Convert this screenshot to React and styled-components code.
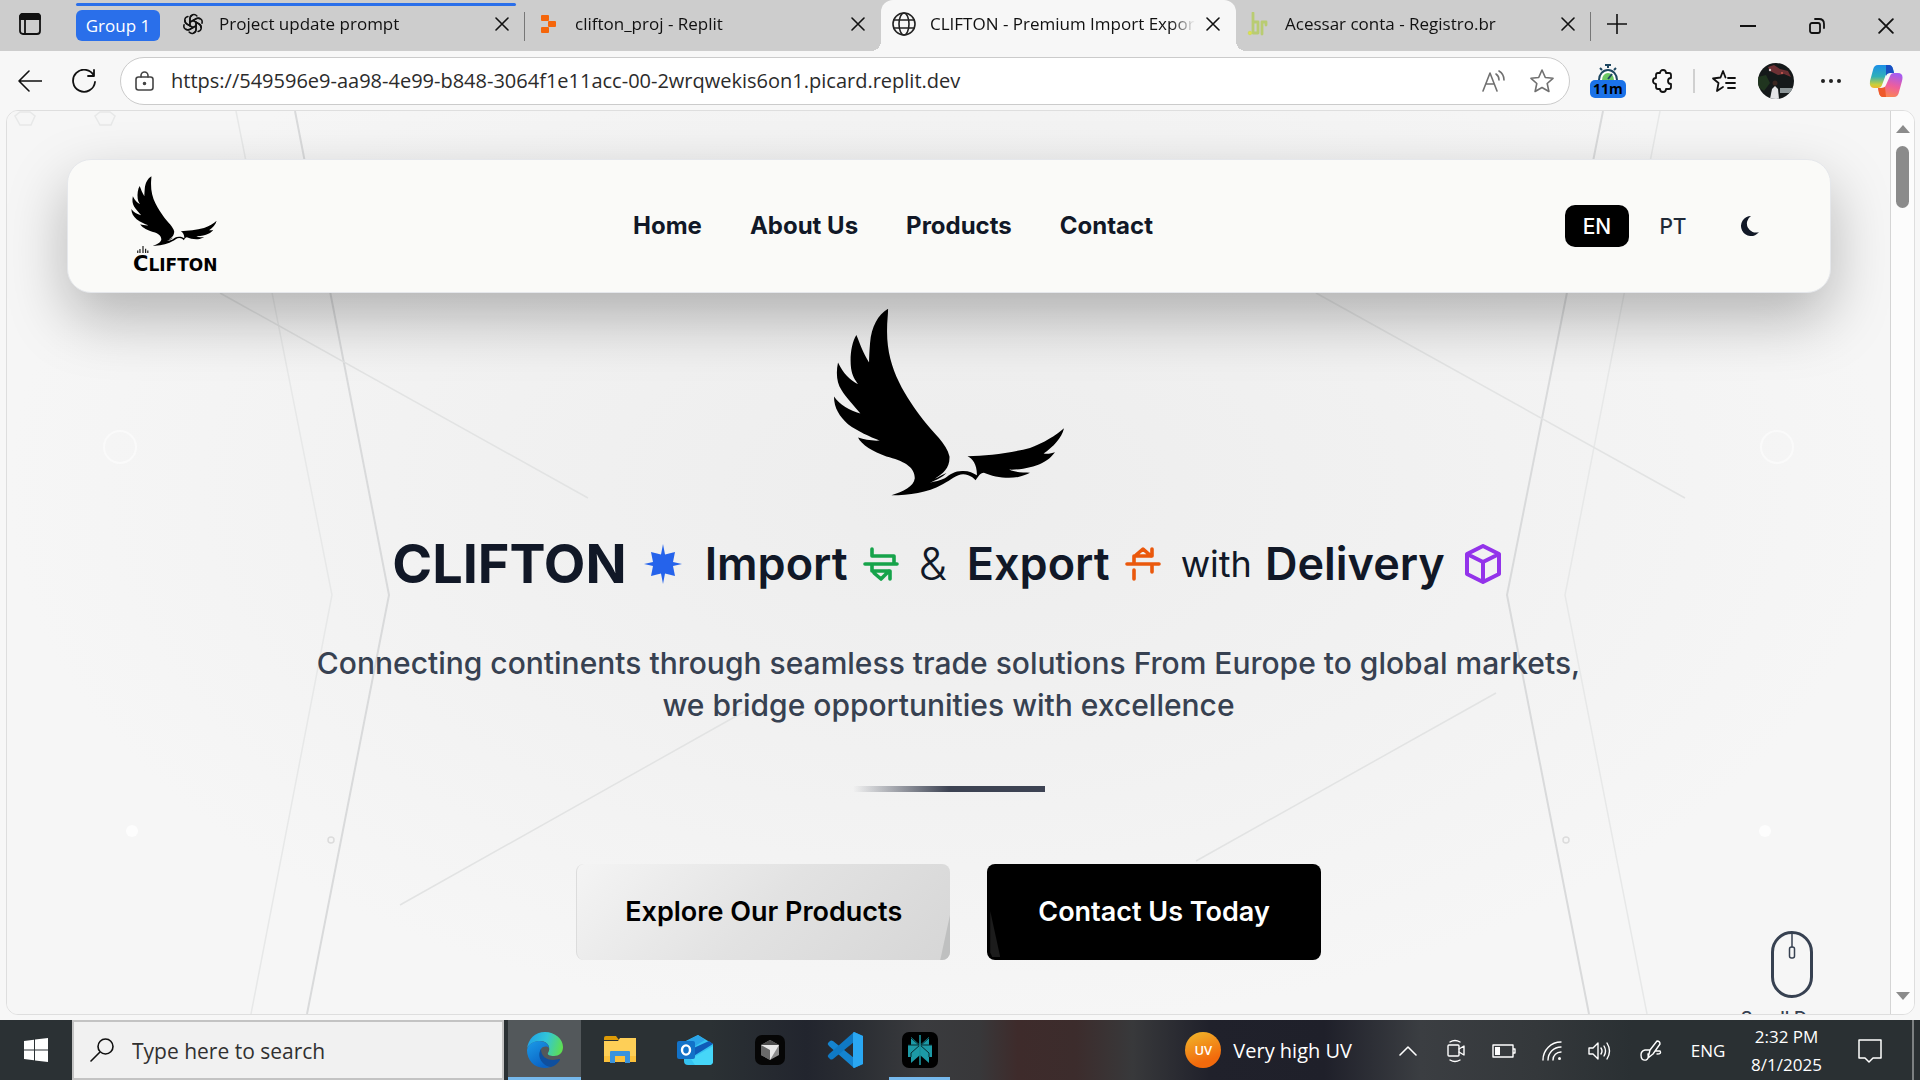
import React from 'react';
import styled, { createGlobalStyle, css } from 'styled-components';

const ui = '"Open Sans", "Noto Sans", sans-serif';
const site = 'Inter, "Liberation Sans", sans-serif';

const GlobalStyle = createGlobalStyle`
  *, *::before, *::after { box-sizing: border-box; }
  body { margin: 0; background: #f7f7f7; font-family: ${ui}; color: #111; }
  button, input { font: inherit; color: inherit; }
  button { background: none; border: 0; padding: 0; cursor: pointer; }
  svg { display: block; flex: none; }
  h1, p { margin: 0; }
`;

const Screen = styled.div`
  height: 100vh;
  display: flex;
  flex-direction: column;
  overflow: hidden;
`;

/* ---------- tab strip ---------- */

const TabStrip = styled.header`
  flex: none;
  height: 51px;
  display: flex;
  background: #cdcdcd;
  font-size: 17px;
`;

const WorkspaceButton = styled.button`
  width: 76px;
  padding-left: 19px;
  padding-bottom: 4px;
`;

const TabGroup = styled.div`
  display: flex;
  flex: 0 1 450px;
  min-width: 0;
  position: relative;

  &::before {
    content: '';
    position: absolute;
    left: 0;
    right: 10px;
    top: 3px;
    height: 3px;
    border-radius: 2px;
    background: #2a6fea;
  }
`;

const GroupPill = styled.button`
  width: 84px;
  height: 31px;
  margin: 10px 10px 0 0;
  border-radius: 6px;
  background: #2a6fea;
  color: #fff;
  flex: none;
`;

const Tab = styled.div`
  flex: 0 1 355px;
  min-width: 0;
  display: flex;
  align-items: center;
  gap: 14px;
  padding: 0 11px 4px;
  position: relative;

  ${(p) => p.$divided && css`
    &::after {
      content: '';
      position: absolute;
      right: 0;
      top: 12px;
      height: 29px;
      width: 1px;
      background: #777;
    }
  `}

  ${(p) => p.$active && css`
    background: #f7f7f7;
    border-radius: 12px 12px 0 0;
    &::before, &::after {
      content: '';
      position: absolute;
      bottom: 0;
      width: 10px;
      height: 10px;
    }
    &::before { left: -10px; background: radial-gradient(circle at 0 0, transparent 10px, #f7f7f7 10px); }
    &::after { right: -10px; background: radial-gradient(circle at 100% 0, transparent 10px, #f7f7f7 10px); }
  `}
`;

const TabTitle = styled.span`
  flex: 1;
  min-width: 0;
  margin-right: -8px;
  overflow: hidden;
  white-space: nowrap;
  color: #111;
  mask-image: linear-gradient(90deg, #000 calc(100% - 24px), transparent);
`;

const TabClose = styled.button`
  width: 24px;
  height: 24px;
  display: grid;
  place-items: center;
  flex: none;
`;

const NewTab = styled.button`
  width: 52px;
  padding-bottom: 4px;
  display: grid;
  place-items: center;
`;

const WindowControls = styled.div`
  margin-left: auto;
  display: flex;
`;

const WindowButton = styled.button`
  width: 69px;
  display: grid;
  place-items: center;
`;

/* ---------- toolbar ---------- */

const Toolbar = styled.div`
  flex: none;
  height: 59px;
  display: flex;
  align-items: center;
  padding: 0 6px;
  background: #f7f7f7;
`;

const ToolButton = styled.button`
  width: ${(p) => p.$w || 54}px;
  height: 48px;
  display: grid;
  place-items: center;
  flex: none;
`;

const AddressBar = styled.form`
  flex: 1;
  min-width: 0;
  height: 48px;
  margin-left: 6px;
  display: flex;
  align-items: center;
  gap: 16px;
  padding: 0 3px 0 14px;
  border: 1px solid #cbcbcb;
  border-radius: 24px;
  background: #fff;
`;

const AddressInput = styled.input`
  flex: 1;
  min-width: 0;
  border: 0;
  outline: 0;
  padding: 0;
  background: none;
  font-size: 20px;
  color: #2b2b2b;
`;

const AddressActions = styled.div`
  display: flex;
`;

const TimerButton = styled.button`
  width: 36px;
  margin: 0 10px 0 20px;
  display: flex;
  flex-direction: column;
  align-items: center;
`;

const TimerBadge = styled.span`
  width: 36px;
  height: 18px;
  border-radius: 5px;
  background: #1b72e8;
  color: #000;
  font-size: 14px;
  line-height: 18px;
  font-weight: 700;
`;

const ToolDivider = styled.span`
  width: 2px;
  height: 24px;
  margin: 0 5px 0 3px;
  background: #d0d0d0;
`;

/* ---------- web page ---------- */

const PageFrame = styled.div`
  flex: 1;
  min-height: 0;
  display: flex;
  margin: 0 5px 5px 6px;
  border: 1px solid #dedede;
  border-radius: 12px;
  overflow: hidden;
`;

const Page = styled.main`
  flex: 1;
  min-width: 0;
  overflow: hidden;
  position: relative;
  display: flex;
  flex-direction: column;
  align-items: center;
  font-family: ${site};
  color: #111827;
  background:
    radial-gradient(ellipse 50% 60% at 50% 42%, #ededed 0%, rgba(239, 239, 239, 0.7) 50%, rgba(244, 244, 244, 0) 100%),
    #f6f6f6;
`;

const Backdrop = styled.svg`
  position: absolute;
  inset: 0;
  width: 100%;
  height: 100%;
`;

const NavBar = styled.nav`
  position: relative;
  align-self: stretch;
  height: 134px;
  flex: none;
  margin: 48px 59px 0 60px;
  padding: 0 47px 0 63px;
  display: flex;
  align-items: center;
  justify-content: space-between;
  border: 1px solid #e5e7eb;
  border-radius: 24px;
  background: #fafaf8;
  box-shadow: 0 25px 60px rgba(0, 0, 0, 0.27);
`;

const Brand = styled.a`
  width: 90px;
  display: flex;
  flex-direction: column;
  align-items: flex-start;
  color: #000;
  text-decoration: none;
`;

const Columns = styled.svg`
  margin-left: 5px;
`;

const Wordmark = styled.span`
  margin-left: 2px;
  font-family: "DejaVu Sans", sans-serif;
  font-weight: 700;
  font-size: 17px;
  line-height: 22px;
`;

const WordmarkCap = styled.span`
  font-size: 21px;
`;

const NavLinks = styled.div`
  display: flex;
  gap: 48px;
`;

const NavLink = styled.a`
  font-size: 24px;
  line-height: 36px;
  font-weight: 700;
  color: #111827;
  text-decoration: none;
`;

const NavTools = styled.div`
  display: flex;
  align-items: center;
  gap: 12px;
`;

const LangButton = styled.button`
  width: 64px;
  height: 42px;
  border-radius: 10px;
  font-size: 21px;
  font-weight: 500;
  background: ${(p) => (p.$on ? '#000' : 'transparent')};
  color: ${(p) => (p.$on ? '#fff' : '#1f2937')};
`;

const ThemeButton = styled.button`
  width: 66px;
  height: 42px;
  display: grid;
  place-items: center;
`;

const HeroMark = styled.div`
  position: relative;
  margin-top: 15px;
`;

const Headline = styled.h1`
  position: relative;
  display: flex;
  align-items: center;
  gap: 20px;
  margin-top: 34px;
  padding-right: 4px;
  height: 68px;
  font-weight: 400;
  white-space: nowrap;
`;

const HeadPart = styled.span`
  display: flex;
  align-items: center;
  gap: ${(p) => p.$gap || 15}px;
`;

const Word = styled.span`
  font-size: ${(p) => p.$size}px;
  line-height: 68px;
  font-weight: ${(p) => p.$weight};
`;

const Lead = styled.p`
  position: relative;
  max-width: 1300px;
  margin-top: 44px;
  font-size: 30px;
  line-height: 42px;
  font-weight: 500;
  text-align: center;
  color: #374151;
`;

const Rule = styled.div`
  position: relative;
  width: 192px;
  height: 6px;
  margin-top: 60px;
  background: linear-gradient(90deg, transparent, #3d4353 50%, #3d4353);
`;

const Actions = styled.div`
  position: relative;
  display: flex;
  gap: 37px;
  margin-top: 72px;
`;

const Action = styled.button`
  position: relative;
  height: 96px;
  padding: 0 ${(p) => (p.$dark ? 51 : 48)}px 2px;
  border-radius: 8px;
  overflow: hidden;
  font-size: 27px;
  font-weight: 600;
  white-space: nowrap;
  color: ${(p) => (p.$dark ? '#fff' : '#000')};
  background: ${(p) => (p.$dark ? '#000' : 'linear-gradient(135deg, #f4f4f4, #e2e2e2 50%, #d6d6d6)')};
  border-left: ${(p) => (p.$dark ? '0' : '1px solid #dcdcdc')};

  &::after {
    content: '';
    position: absolute;
    width: 10px;
    height: 46px;
    ${(p) => (p.$dark
      ? 'left: 3px; bottom: 3px; background: #1c1c1c; clip-path: polygon(0 0, 100% 100%, 20% 100%, 0 90%);'
      : 'right: 0; bottom: 0; background: #bfc0c0; clip-path: polygon(100% 0, 100% 100%, 0 100%);')}
  }
`;

const ScrollHint = styled.div`
  position: absolute;
  right: 46px;
  top: 820px;
  display: flex;
  flex-direction: column;
  align-items: center;
  gap: 7px;
  font-size: 18px;
  line-height: 27px;
  font-weight: 500;
  width: 104px;
  white-space: nowrap;
  color: #374151;
`;

const ScrollTrack = styled.div`
  width: 24px;
  flex: none;
  display: flex;
  flex-direction: column;
  align-items: center;
  padding: 13px 0;
  background: #fcfcfc;
  border-left: 1px solid #d5d5d5;
`;

const ScrollThumb = styled.div`
  width: 13px;
  height: 62px;
  margin: 12px 0 auto;
  border-radius: 7px;
  background: #8b8b8b;
`;

/* ---------- taskbar ---------- */

const Taskbar = styled.footer`
  flex: none;
  height: 60px;
  display: flex;
  color: #fff;
  background: linear-gradient(90deg, #2b3134 0, #2b3134 37%, #22252e 42%, #2c2f34 45%, #3a3b3e 48%, #38383a 51%, #3e2b2b 53%, #3c2c2c 56%, #38393b 59%, #20212b 63%, #1f202a 69%, #3b3e42 74%, #34383b 80%, #2a3033 85%, #2a3033 100%);
`;

const StartButton = styled.button`
  width: 72px;
  display: grid;
  place-items: center;
`;

const SearchBox = styled.label`
  width: 432px;
  display: flex;
  align-items: center;
  gap: 18px;
  padding-left: 16px;
  margin-right: 4px;
  background: #f1f1f1;
  border: 2px solid #c3c3c3;
`;

const SearchInput = styled.input`
  flex: 1;
  min-width: 0;
  padding: 2px 0 0;
  border: 0;
  outline: 0;
  background: none;
  font-size: 21px;
  &::placeholder { color: #303030; opacity: 1; }
`;

const Apps = styled.div`
  display: flex;
  gap: 2px;
`;

const AppButton = styled.button`
  width: 73px;
  display: grid;
  place-items: center;
  position: relative;
  background: ${(p) => (p.$focused ? '#53585b' : 'none')};

  ${(p) => p.$open && css`
    &::after {
      content: '';
      position: absolute;
      left: ${p.$focused ? 0 : 6}px;
      right: ${p.$focused ? 0 : 6}px;
      bottom: 0;
      height: 3px;
      background: #76b9ed;
    }
  `}
`;

const Tray = styled.div`
  margin-left: auto;
  display: flex;
`;

const Weather = styled.button`
  display: flex;
  align-items: center;
  gap: 12px;
  margin-right: 32px;
  font-size: 20px;
  white-space: nowrap;
`;

const UvDot = styled.span`
  width: 36px;
  height: 36px;
  border-radius: 50%;
  background: linear-gradient(160deg, #f0b92c, #f26a0c 75%);
  font-size: 13px;
  line-height: 36px;
  font-weight: 600;
`;

const TrayButton = styled.button`
  width: ${(p) => p.$w || 48}px;
  padding-top: 1px;
  display: grid;
  place-items: center;
  align-content: center;
  font-size: 17px;
  line-height: 28px;
  white-space: nowrap;
`;

const ShowDesktop = styled.button`
  width: 8px;
  margin-left: 7px;
  border-left: 2px solid #7c8082;
`;

/* ---------- drawings ---------- */

const Line = ({ w = 24, h, vb, d, stroke = 'currentColor', sw = 1.6, fill = 'none', children }) => (
  <svg width={w} height={h || w} viewBox={vb || `0 0 ${w} ${h || w}`} fill={fill} stroke={stroke} strokeWidth={sw} strokeLinecap="round" strokeLinejoin="round" aria-hidden="true">
    {d && <path d={d} />}
    {children}
  </svg>
);

const Cross = ({ size = 14 }) => <Line w={size} vb="0 0 14 14" sw={1.6} d="M1 1L13 13M13 1L1 13" />;

const Eagle = ({ width, height }) => (
  <svg width={width} height={height} viewBox="100 55 695 563" preserveAspectRatio="none" role="img" aria-label="Clifton eagle">
    <path fill="#000" d="M265 57C235 75 215 110 211 160C209 185 208 205 208 218C190 190 180 160 170 136C155 160 150 200 154 235C158 260 165 270 175 283C150 270 130 250 115 218C108 250 112 280 125 300C140 325 165 350 182 371C150 362 120 345 103 320C103 355 120 380 145 403C175 425 210 440 240 452C215 453 195 450 175 443C185 465 220 485 260 500C310 513 345 530 345 565C342 590 310 605 275 616C330 615 380 610 430 582C455 570 470 553 490 553C510 555 520 562 527 571C535 560 540 548 552 548C580 560 620 568 655 561C670 557 680 553 690 548C670 548 645 548 628 539C665 540 700 532 725 520C745 510 755 500 765 487C755 490 745 493 731 491C760 470 785 445 792 415C770 435 730 460 690 474C630 490 560 498 503 499C518 505 532 525 531 556C520 548 505 542 487 543C465 543 450 553 435 565C420 572 405 575 390 578C410 570 430 560 440 549C430 552 415 563 405 566C430 550 450 535 449 500C440 460 400 430 370 390C320 320 260 240 262 120C262 95 265 75 265 57Z" />
  </svg>
);

const OpenAiIcon = () => (
  <Line w={24} stroke="#111" sw={1.5}>
    {[0, 60, 120, 180, 240, 300].map((a) => (
      <path key={a} transform={`rotate(${a} 12 12)`} d="M8.9 13.8V6.3a4 4 0 0 1 7-2.4M8.9 10.3L15 6.8a4 4 0 0 1 4 .1" />
    ))}
  </Line>
);

const ReplitIcon = () => (
  <svg width="24" height="24" viewBox="0 0 24 24" aria-hidden="true">
    <g fill="#f5660b">
      <rect x="4" y="3" width="8" height="6" rx="1" />
      <rect x="11" y="9" width="8" height="6" rx="1" />
      <rect x="4" y="15" width="8" height="6" rx="1" />
    </g>
  </svg>
);

const GlobeIcon = () => (
  <Line w={24} stroke="#222" sw={1.6}>
    <circle cx="12" cy="12" r="11" />
    <ellipse cx="12" cy="12" rx="5" ry="11" />
    <path d="M2 8H22M2 16H22" />
  </Line>
);

const BrIcon = () => (
  <Line w={24} sw={2.8} stroke="#b9cc72">
    <path d="M6 1V21H11V10H6M15 22V10H19V13" />
    <circle cx="3" cy="21" r="1.8" fill="#e2e04a" stroke="#cddb60" strokeWidth="1" />
  </Line>
);

const TimerIcon = () => (
  <svg width="24" height="16" viewBox="0 0 24 16" aria-hidden="true">
    <path d="M9 1H15M12 1V4M4 4L6 6M20 4L18 6" stroke="#1d4660" strokeWidth="2" />
    <path d="M3 16A9 10 0 0 1 21 16" fill="#fff" stroke="#1d4660" strokeWidth="2" />
    <path d="M6 16A6 7 0 0 1 18 16" fill="#6cc864" />
    <path d="M12 15L16 10" stroke="#1d4660" strokeWidth="2" />
  </svg>
);

const Avatar = () => (
  <svg width="36" height="36" viewBox="0 0 36 36" aria-hidden="true">
    <clipPath id="avatarClip"><circle cx="18" cy="18" r="18" /></clipPath>
    <g clipPath="url(#avatarClip)">
      <rect width="36" height="36" fill="#15191a" />
      <path d="M10 4L16 2L22 6L30 8L33 14L26 11L20 12L12 8Z" fill="#6d3034" />
      <path d="M0 14L8 12L12 20L6 28L0 24Z" fill="#20351f" />
      <path d="M22 25H36V30H22Z" fill="#8d9698" />
      <path d="M14 26L17 23L20 26L21 36H12Z" fill="#e4e4e6" />
      <circle cx="17" cy="20" r="2.5" fill="#3a2620" />
      <circle cx="12" cy="7" r="1.2" fill="#d8c9ca" />
      <circle cx="24" cy="10" r="1" fill="#d25b52" />
    </g>
  </svg>
);

const CopilotIcon = () => (
  <svg width="34" height="32" viewBox="0 0 34 32" aria-hidden="true">
    <defs>
      <linearGradient id="coA" x1="0" y1="0" x2="0" y2="1">
        <stop offset="0" stopColor="#1b8fe8" /><stop offset=".5" stopColor="#2fb0b8" /><stop offset=".85" stopColor="#c9cf3a" /><stop offset="1" stopColor="#f3b52c" />
      </linearGradient>
      <linearGradient id="coB" x1="0.6" y1="0" x2="0.3" y2="1">
        <stop offset="0" stopColor="#a65cf0" /><stop offset=".5" stopColor="#ee5e9c" /><stop offset="1" stopColor="#fb8a4c" />
      </linearGradient>
    </defs>
    <path d="M9 0H20Q23 0 24 4L25 8H21Q17 8 16 12L13 20Q12 23 9 23H5Q0 23 1 16L4 5Q5 0 9 0Z" fill="url(#coA)" />
    <path d="M17 0H20Q23 0 24 4L25 8H21Q18 8 17 11Z" fill="#1a4fc2" />
    <path d="M25 32H14Q11 32 10 28L9 23H12Q16 23 17 20L21 11Q22 8 25 8H29Q35 8 33 16L30 27Q29 32 25 32Z" fill="url(#coB)" />
    <path d="M17 32H14Q11 32 10 28L9 23H12Q15 23 16 22Z" fill="#ee5a2c" />
  </svg>
);

const EdgeIcon = () => (
  <svg width="36" height="36" viewBox="0 0 36 36" aria-hidden="true">
    <defs>
      <linearGradient id="edA" x1="0" y1="0.4" x2="1" y2="0.6">
        <stop offset="0" stopColor="#1fa3e6" /><stop offset=".5" stopColor="#32c6d8" /><stop offset="1" stopColor="#5fe04e" />
      </linearGradient>
      <linearGradient id="edB" x1="0" y1="0" x2="0.6" y2="1">
        <stop offset="0" stopColor="#1b9be8" /><stop offset="1" stopColor="#0a62c4" />
      </linearGradient>
    </defs>
    <path d="M0 17C1 7 8 0 18 0C28 0 36 7 36 15C36 21 32 24 27 24C23 24 20 23 21 21C24 17 22 9 13 9C6 9 1 13 0 17Z" fill="url(#edA)" />
    <path d="M0 18C1 12 7 9 12 9C18 9 22 12 22 16C20 14 16 14 14 17C11 22 14 33 24 35C10 39 0 30 0 18Z" fill="url(#edB)" />
    <path d="M14 17C9 25 16 34 24 35C28 34 31 31 33 28C33 26 30 28 26 28C19 28 14 24 14 17Z" fill="#0f4f9e" />
  </svg>
);

const FolderIcon = () => (
  <svg width="34" height="28" viewBox="0 0 34 28" aria-hidden="true">
    <path d="M1 2Q1 0 3 0H13L16 4H1Z" fill="#dd9a06" />
    <path d="M1 5H15L17 2H33V26H1Z" fill="#fecf57" />
    <path d="M1 20H33V26H1Z" fill="#fcc13b" />
    <path d="M7 27V16Q7 15 8 15H26Q27 15 27 16V27H22V20H12V27Z" fill="#3a93dd" />
  </svg>
);

const OutlookIcon = () => (
  <svg width="36" height="30" viewBox="0 0 36 30" aria-hidden="true">
    <path d="M7 7L21 0L36 9V26Q36 30 32 30H11Q7 30 7 26Z" fill="#35c3f1" />
    <path d="M7 7L21 0L28 5L10 16Z" fill="#2ba4e8" />
    <path d="M10 16L32 6L36 9L15 22Z" fill="#0f5bb8" />
    <path d="M36 11L14 24L18 30H32Q36 30 36 26Z" fill="#46d6f8" />
    <rect x="0" y="6" width="18" height="18" rx="2" fill="#1272c8" />
    <ellipse cx="9" cy="15" rx="4" ry="4.6" fill="none" stroke="#fff" strokeWidth="2.4" />
  </svg>
);

const CubeAppIcon = () => (
  <svg width="30" height="30" viewBox="0 0 30 30" aria-hidden="true">
    <rect width="30" height="30" rx="7" fill="#060606" />
    <path d="M15 5L24 10V20L15 25L6 20V10Z" fill="#8d8d8d" />
    <path d="M6 10L15 14V25L6 20Z" fill="#6a6a6a" />
    <path d="M6 10L15 5L24 10L15 13Z" fill="#4d4d4d" />
    <path d="M6 10H24L15 25V15Z" fill="#e8e8e8" />
  </svg>
);

const VsCodeIcon = () => (
  <svg width="36" height="36" viewBox="0 0 36 36" aria-hidden="true">
    <path d="M27 0L36 4V32L27 36L2 14Q0 12 1 11L3 9Q4 8 6 9L27 26Z" fill="#1484d0" />
    <path d="M27 0L2 22Q0 24 1 25L3 27Q4 28 6 27L27 10Z" fill="#0f79c4" />
    <path d="M27 0L36 4V32L27 36Q26 36 26 34V2Q26 0 27 0Z" fill="#2aa7f2" />
  </svg>
);

const PerplexityIcon = () => (
  <svg width="36" height="36" viewBox="0 0 36 36" aria-hidden="true">
    <rect width="36" height="36" rx="7" fill="#000" />
    <path d="M9 5L18 13L27 5V13H30V25H27V31L18 23L9 31V25H6V13H9Z" fill="#1c9aa6" />
    <path d="M18 3V33M9 6L18 14L27 6M6 13H30M9 25V21L18 13L27 21V25" fill="none" stroke="#062c31" strokeWidth="1" />
    <path d="M18 3V33" stroke="#21b5c2" strokeWidth="1.2" />
  </svg>
);

const NavColumns = () => (
  <Columns width="14" height="7" viewBox="0 0 14 8" aria-hidden="true">
    <path d="M1 8V5M3.500 8V3.500M7 8V0M10 8V3M12.500 8V5" stroke="#222" strokeWidth="1.400" />
  </Columns>
);

const Scenery = () => (
  <Backdrop viewBox="7 111 1883 903" preserveAspectRatio="xMidYMin slice" fill="none" aria-hidden="true">
    <g stroke="#d9dadb" strokeWidth="2">
      <path d="M295 111L389 595L307 1014" />
      <path d="M1603 111L1507 595L1589 1014" />
    </g>
    <g stroke="#e7e8e8" strokeWidth="1.500">
      <path d="M236 111L332 595L251 1014M1660 111L1565 595L1647 1014" />
      <path d="M220 293L588 498M1316 293L1685 498M400 905L747 710M1196 861L1496 693" stroke="#e2e3e3" />
      <path d="M20 112H30L35 116L31 125H20L15 116ZM100 112H110L115 116L111 125H100L95 116Z" />
      <circle cx="331" cy="840" r="3" stroke="#dcdcdc" /><circle cx="1566" cy="840" r="3" stroke="#dcdcdc" />
    </g>
    <g stroke="#fafafa" strokeWidth="2">
      <circle cx="120" cy="447" r="16" /><circle cx="1777" cy="447" r="16" />
    </g>
    <g fill="#fdfdfd">
      <circle cx="132" cy="831" r="6" /><circle cx="1765" cy="831" r="6" />
    </g>
  </Backdrop>
);

/* ---------- composition ---------- */

const BrowserTab = ({ icon, title, active, divided }) => (
  <Tab $active={active} $divided={divided}>
    {icon}
    <TabTitle>{title}</TabTitle>
    <TabClose aria-label={`Close ${title}`}><Cross /></TabClose>
  </Tab>
);

const BrowserTabs = () => (
  <TabStrip>
    <WorkspaceButton aria-label="Tab actions">
      <Line w={22} stroke="#111" sw={1.8}>
        <rect x="1" y="1" width="20" height="20" rx="3" />
        <path d="M1 6V4Q1 1 4 1H18Q21 1 21 4V6Z" fill="#111" />
        <path d="M6 6V21" />
      </Line>
    </WorkspaceButton>
    <TabGroup>
      <GroupPill>Group 1</GroupPill>
      <BrowserTab icon={<OpenAiIcon />} title="Project update prompt" divided />
    </TabGroup>
    <BrowserTab icon={<ReplitIcon />} title="clifton_proj - Replit" />
    <BrowserTab icon={<GlobeIcon />} title="CLIFTON - Premium Import Export" active />
    <BrowserTab icon={<BrIcon />} title="Acessar conta - Registro.br" divided />
    <NewTab aria-label="New tab"><Line w={20} d="M10 0V20M0 10H20" /></NewTab>
    <WindowControls>
      <WindowButton aria-label="Minimize"><Line w={16} sw={2} d="M0 8H16" /></WindowButton>
      <WindowButton aria-label="Restore">
        <Line w={16} sw={1.8}><rect x="1" y="5" width="10" height="10" rx="2" /><path d="M6 1H10Q15 1 15 6V10" /></Line>
      </WindowButton>
      <WindowButton aria-label="Close"><Cross size={16} /></WindowButton>
    </WindowControls>
  </TabStrip>
);

const BrowserToolbar = () => (
  <Toolbar>
    <ToolButton $w={48} aria-label="Back"><Line w={24} d="M24 12H1M11 2L1 12L11 22" /></ToolButton>
    <ToolButton $w={60} aria-label="Refresh"><Line w={24} d="M22 7A11 11 0 1 0 23 13M22 1V7H16" sw={1.8} /></ToolButton>
    <AddressBar onSubmit={(e) => e.preventDefault()}>
      <Line w={20} stroke="#444" sw={1.6}>
        <rect x="1" y="6" width="17" height="13" rx="2.500" />
        <path d="M6 6V4.500A3.500 3.500 0 0 1 13 4.500V6" />
        <circle cx="9.500" cy="12.500" r="1" fill="#444" />
      </Line>
      <AddressInput aria-label="Address" defaultValue="https://549596e9-aa98-4e99-b848-3064f1e11acc-00-2wrqwekis6on1.picard.replit.dev" />
      <AddressActions>
        <ToolButton $w={48} aria-label="Read aloud">
          <Line w={24} stroke="#707070" d="M1 22L8 4L15 22M4 15H12M14 5Q17 7 17 11M17 2Q22 5 22 11" />
        </ToolButton>
        <ToolButton $w={48} aria-label="Add to favorites">
          <Line w={24} stroke="#707070" d="M12 1L15.300 8.500L23 9.300L17.200 14.500L18.900 22.500L12 18.500L5.100 22.500L6.800 14.500L1 9.300L8.700 8.500Z" />
        </ToolButton>
      </AddressActions>
    </AddressBar>
    <TimerButton aria-label="Timer extension">
      <TimerIcon />
      <TimerBadge>11m</TimerBadge>
    </TimerButton>
    <ToolButton aria-label="Extensions">
      <Line w={24} sw={1.8} d="M7 4H9A3 3 0 0 1 15 4H18Q20 4 20 6V9A3 3 0 0 0 20 15V18Q20 20 18 20H15A3 3 0 0 1 9 20H7Q5 20 5 18V15A3 3 0 0 1 5 9V6Q5 4 7 4Z" />
    </ToolButton>
    <ToolDivider />
    <ToolButton $w={48} aria-label="Favorites">
      <Line w={24} sw={1.8} d="M13.500 8.500L11 2L8.500 8.500L1 9.500L6.500 14L5 22L11 18M16 9H23M14 14H23M16 19H23" />
    </ToolButton>
    <ToolButton $w={56} aria-label="Profile"><Avatar /></ToolButton>
    <ToolButton aria-label="Settings and more">
      <Line w={22} h={6} stroke="none" fill="#222"><circle cx="3" cy="3" r="2" /><circle cx="11" cy="3" r="2" /><circle cx="19" cy="3" r="2" /></Line>
    </ToolButton>
    <ToolButton $w={56} aria-label="Copilot"><CopilotIcon /></ToolButton>
  </Toolbar>
);

const SiteNav = () => (
  <NavBar>
    <Brand href="#home">
      <Eagle width={86} height={70} />
      <NavColumns />
      <Wordmark><WordmarkCap>C</WordmarkCap>LIFTON</Wordmark>
    </Brand>
    <NavLinks>
      <NavLink href="#home">Home</NavLink>
      <NavLink href="#about">About Us</NavLink>
      <NavLink href="#products">Products</NavLink>
      <NavLink href="#contact">Contact</NavLink>
    </NavLinks>
    <NavTools>
      <LangButton $on>EN</LangButton>
      <LangButton>PT</LangButton>
      <ThemeButton aria-label="Dark mode">
        <svg width="20" height="22" viewBox="0 0 20 22" aria-hidden="true">
          <path d="M11 1A10 10 0 1 0 19 17A9 9 0 0 1 11 1Z" fill="#111827" />
        </svg>
      </ThemeButton>
    </NavTools>
  </NavBar>
);

const Hero = () => (
  <>
    <HeroMark><Eagle width={232} height={188} /></HeroMark>
    <Headline>
      <HeadPart $gap={17}>
        <Word $size={54} $weight={700}>CLIFTON</Word>
        <svg width="41" height="40" viewBox="-19 -20 41 40" aria-hidden="true">
          <path fill="#2563eb" d="M0-20L2-9.500L12-12L10-2L19 0L10 2L12 12L2 9.500L0 20L-2 9.500L-12 12L-10 2L-19 0L-10-2L-12-12L-2-9.500Z" />
        </svg>
      </HeadPart>
      <HeadPart>
        <Word $size={45} $weight={600}>Import</Word>
        <Line w={36} stroke="#16a34a" sw={3.6} d="M9 3V10H31V17M2 18H34M9 18V25H27V33M11 27L18 33L26 25" />
      </HeadPart>
      <Word $size={45} $weight={300}>&amp;</Word>
      <HeadPart>
        <Word $size={45} $weight={600}>Export</Word>
        <Line w={36} stroke="#ea580c" sw={3.6} d="M9 24V33M2 18H34M9 17V10H27V3M27 18V26M11 9L18 3L26 10" />
      </HeadPart>
      <HeadPart $gap={13}>
        <Word $size={36} $weight={400}>with</Word>
        <Word $size={45} $weight={600}>Delivery</Word>
      </HeadPart>
      <svg width="36" height="40" viewBox="0 0 36 40" fill="none" stroke="#9333ea" strokeWidth="4" strokeLinejoin="round" aria-hidden="true">
        <path d="M18 2L34 10V30L18 38L2 30V10ZM2 10L18 18L34 10M18 18V38" />
      </svg>
    </Headline>
    <Lead>
      Connecting continents through seamless trade solutions From Europe to global markets,
      we bridge opportunities with excellence
    </Lead>
    <Rule />
    <Actions>
      <Action>Explore Our Products</Action>
      <Action $dark>Contact Us Today</Action>
    </Actions>
  </>
);

const WebPage = () => (
  <PageFrame>
    <Page>
      <Scenery />
      <SiteNav />
      <Hero />
      <ScrollHint>
        <Line w={42} h={67} stroke="#374151" sw={3}>
          <rect x="1.500" y="1.500" width="39" height="64" rx="19.500" />
          <path d="M21 3V16" strokeWidth="1.500" />
          <rect x="18.500" y="16" width="5" height="11" rx="2" strokeWidth="1.500" />
        </Line>
        Scroll Down
      </ScrollHint>
    </Page>
    <ScrollTrack>
      <svg width="16" height="10" viewBox="0 0 16 10" aria-hidden="true"><path d="M8 1L15 9H1Z" fill="#8b8b8b" /></svg>
      <ScrollThumb />
      <svg width="16" height="10" viewBox="0 0 16 10" aria-hidden="true"><path d="M8 9L1 1H15Z" fill="#8b8b8b" /></svg>
    </ScrollTrack>
  </PageFrame>
);

const WindowsTaskbar = () => (
  <Taskbar>
    <StartButton aria-label="Start">
      <svg width="24" height="24" viewBox="0 0 24 24" fill="#fff" aria-hidden="true">
        <path d="M0 3L10 1.700V11.500H0ZM11 1.500L24 0V11.500H11ZM0 12.500H10V22.300L0 21ZM11 12.500H24V24L11 22.500Z" />
      </svg>
    </StartButton>
    <SearchBox>
      <Line w={24} stroke="#111" sw={1.6} d="M9.500 14.500L1 23"><circle cx="15.500" cy="8.500" r="7.500" /></Line>
      <SearchInput aria-label="Search" placeholder="Type here to search" />
    </SearchBox>
    <Apps>
      <AppButton $open $focused aria-label="Edge"><EdgeIcon /></AppButton>
      <AppButton aria-label="File Explorer"><FolderIcon /></AppButton>
      <AppButton aria-label="Outlook"><OutlookIcon /></AppButton>
      <AppButton aria-label="Cursor"><CubeAppIcon /></AppButton>
      <AppButton aria-label="Visual Studio Code"><VsCodeIcon /></AppButton>
      <AppButton $open aria-label="Perplexity"><PerplexityIcon /></AppButton>
    </Apps>
    <Tray>
      <Weather><UvDot>UV</UvDot>Very high UV</Weather>
      <TrayButton aria-label="Show hidden icons"><Line w={18} h={10} d="M1 9L9 1L17 9" /></TrayButton>
      <TrayButton aria-label="Meet now">
        <Line w={18} h={24} sw={1.4} d="M12 10L17 7V16L12 13M3 3Q8 0 13 3M3 21Q8 24 13 21"><rect x="1" y="6" width="11" height="11" rx="1" /></Line>
      </TrayButton>
      <TrayButton aria-label="Battery">
        <Line w={24} h={14} sw={1.4}><path d="M1 1H21V13H1ZM21 5H23V9H21" /><path d="M3 3H8V11H3Z" fill="#fff" stroke="none" /></Line>
      </TrayButton>
      <TrayButton aria-label="Network">
        <Line w={20} sw={1.4} d="M1 19A18 18 0 0 1 19 1M6 19A13 13 0 0 1 19 6M11 19A8 8 0 0 1 19 11"><circle cx="17.500" cy="17.500" r="1.500" fill="#fff" stroke="none" /></Line>
      </TrayButton>
      <TrayButton aria-label="Volume">
        <Line w={24} h={20} sw={1.4} d="M1 7H5L10 2V18L5 13H1ZM13 7Q15 10 13 13M16 5Q19 10 16 15M19 2Q24 10 19 18" />
      </TrayButton>
      <TrayButton $w={54} aria-label="Windows Ink">
        <Line w={22} sw={1.4} d="M8 18L10 10L17 1Q20 1 20 4L13 14L8 18M10 10H5Q1 11 1 15Q1 21 6 20Q9 19 8 14M15 11H20Q22 14 17 14" />
      </TrayButton>
      <TrayButton $w={60}>ENG</TrayButton>
      <TrayButton $w={97}><span>2:32 PM</span><span>8/1/2025</span></TrayButton>
      <TrayButton $w={70} aria-label="Notifications">
        <Line w={24} sw={1.5} d="M1 1H23V19H15L11 23L7 19H1Z" />
      </TrayButton>
      <ShowDesktop aria-label="Show desktop" />
    </Tray>
  </Taskbar>
);

export default function App() {
  return (
    <Screen>
      <GlobalStyle />
      <BrowserTabs />
      <BrowserToolbar />
      <WebPage />
      <WindowsTaskbar />
    </Screen>
  );
}
